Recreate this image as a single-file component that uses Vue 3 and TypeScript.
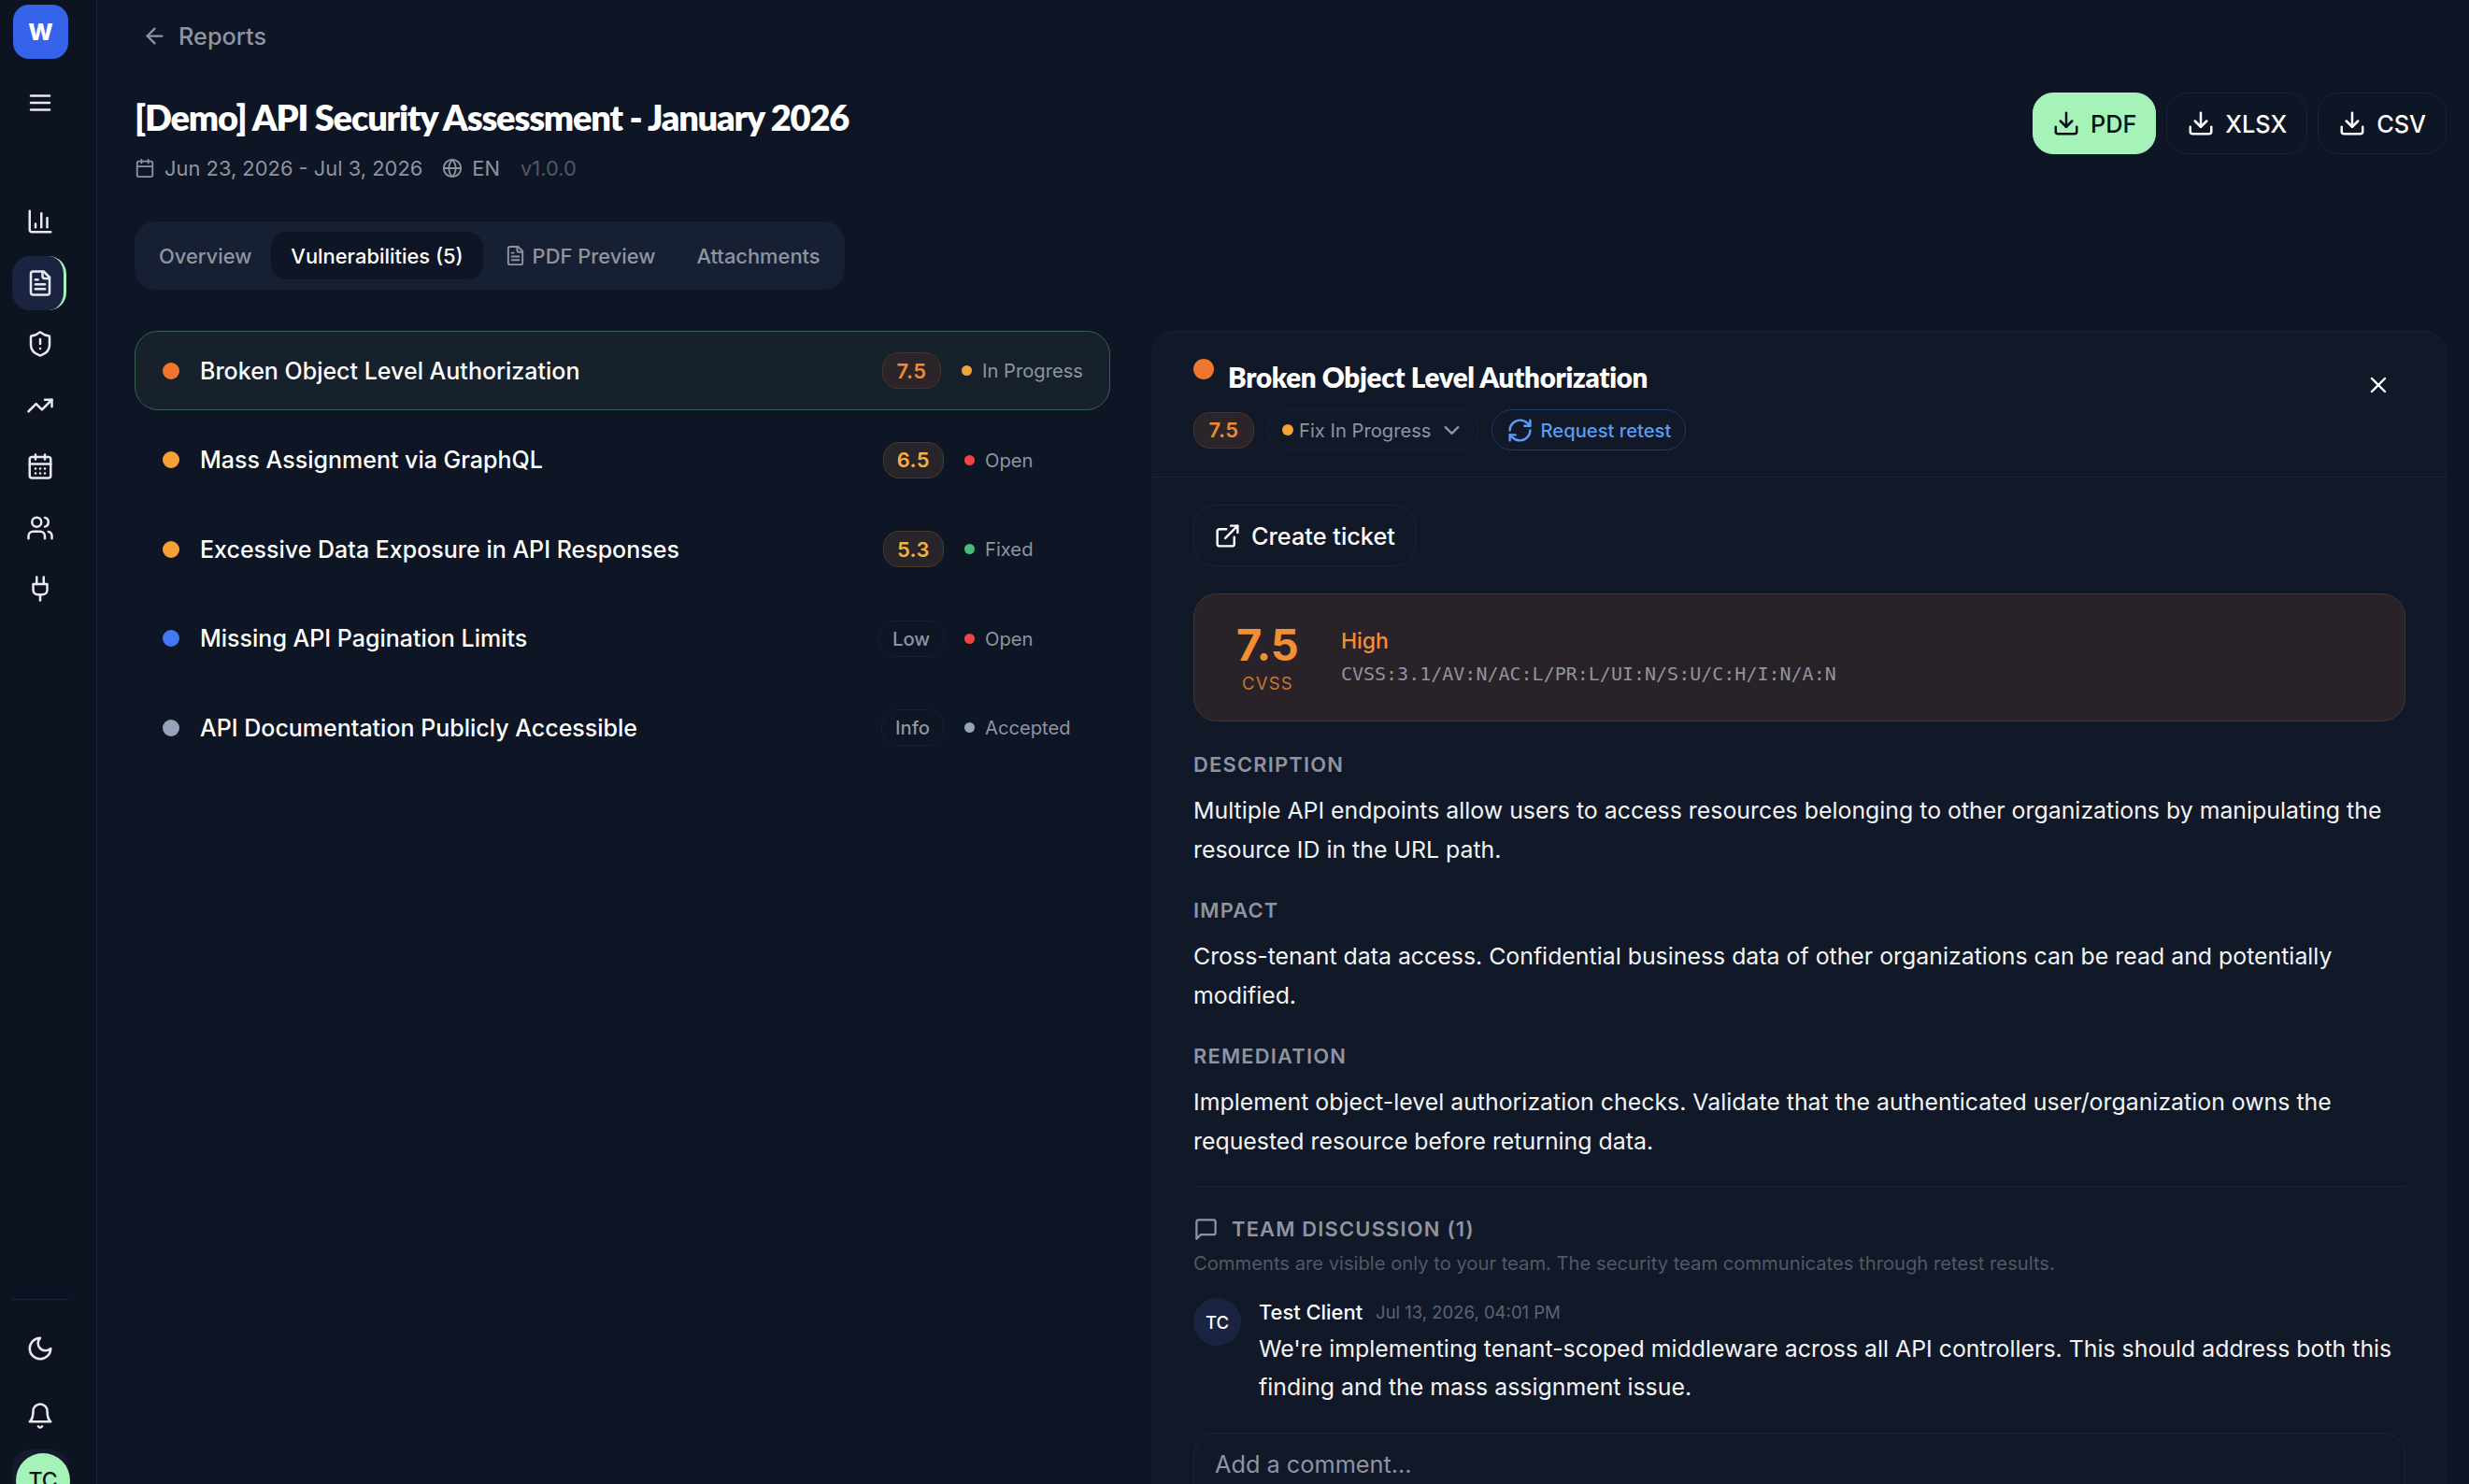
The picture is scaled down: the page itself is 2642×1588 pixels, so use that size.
<script setup lang="ts">
import { h } from "vue";
import type { FunctionalComponent } from "vue";

const icons: Record<string, string[]> = {
  menu: ["M4 6h16", "M4 12h16", "M4 18h16"],
  chart: ["M3 3v16a2 2 0 0 0 2 2h16", "M18 17V9", "M13 17V5", "M8 17v-3"],
  file: [
    "M15 2H6a2 2 0 0 0-2 2v16a2 2 0 0 0 2 2h12a2 2 0 0 0 2-2V7Z",
    "M14 2v4a2 2 0 0 0 2 2h4",
    "M10 9H8",
    "M16 13H8",
    "M16 17H8",
  ],
  shield: [
    "M20 13c0 5-3.5 7.5-7.66 8.95a1 1 0 0 1-.67-.01C7.5 20.5 4 18 4 13V6a1 1 0 0 1 1-1c2 0 4.5-1.2 6.24-2.72a1.17 1.17 0 0 1 1.52 0C14.51 3.81 17 5 19 5a1 1 0 0 1 1 1z",
    "M12 8v4",
    "M12 16h.01",
  ],
  trend: ["M22 7l-8.5 8.5-5-5L2 17", "M16 7h6v6"],
  calendarDays: [
    "M8 2v4",
    "M16 2v4",
    "M5 4h14a2 2 0 0 1 2 2v14a2 2 0 0 1-2 2H5a2 2 0 0 1-2-2V6a2 2 0 0 1 2-2z",
    "M3 10h18",
    "M8 14h.01",
    "M12 14h.01",
    "M16 14h.01",
    "M8 18h.01",
    "M12 18h.01",
    "M16 18h.01",
  ],
  users: [
    "M16 21v-2a4 4 0 0 0-4-4H6a4 4 0 0 0-4 4v2",
    "M9 3a4 4 0 1 0 0 8 4 4 0 1 0 0-8",
    "M22 21v-2a4 4 0 0 0-3-3.87",
    "M16 3.13a4 4 0 0 1 0 7.75",
  ],
  plug: ["M12 22v-5", "M9 8V2", "M15 8V2", "M18 8v5a4 4 0 0 1-4 4h-4a4 4 0 0 1-4-4V8Z"],
  moon: ["M12 3a6 6 0 0 0 9 9 9 9 0 1 1-9-9Z"],
  bell: ["M6 8a6 6 0 0 1 12 0c0 7 3 9 3 9H3s3-2 3-9", "M10.3 21a1.94 1.94 0 0 0 3.4 0"],
  download: ["M21 15v4a2 2 0 0 1-2 2H5a2 2 0 0 1-2-2v-4", "M7 10l5 5 5-5", "M12 15V3"],
  arrowLeft: ["m12 19-7-7 7-7", "M19 12H5"],
  calendar: [
    "M8 2v4",
    "M16 2v4",
    "M5 4h14a2 2 0 0 1 2 2v14a2 2 0 0 1-2 2H5a2 2 0 0 1-2-2V6a2 2 0 0 1 2-2z",
    "M3 10h18",
  ],
  globe: [
    "M12 2a10 10 0 1 0 0 20 10 10 0 1 0 0-20",
    "M12 2a14.5 14.5 0 0 0 0 20 14.5 14.5 0 0 0 0-20",
    "M2 12h20",
  ],
  close: ["M18 6 6 18", "m6 6 12 12"],
  chevron: ["m6 9 6 6 6-6"],
  refresh: [
    "M3 12a9 9 0 0 1 9-9 9.75 9.75 0 0 1 6.74 2.74L21 8",
    "M21 3v5h-5",
    "M21 12a9 9 0 0 1-9 9 9.75 9.75 0 0 1-6.74-2.74L3 16",
    "M8 16H3v5",
  ],
  external: [
    "M15 3h6v6",
    "M10 14 21 3",
    "M18 13v6a2 2 0 0 1-2 2H5a2 2 0 0 1-2-2V8a2 2 0 0 1 2-2h6",
  ],
  message: ["M21 15a2 2 0 0 1-2 2H7l-4 4V5a2 2 0 0 1 2-2h14a2 2 0 0 1 2 2z"],
};

const Icon: FunctionalComponent<{ name: string }> = (props) =>
  h(
    "svg",
    {
      viewBox: "0 0 24 24",
      fill: "none",
      stroke: "currentColor",
      "stroke-width": 2,
      "stroke-linecap": "round",
      "stroke-linejoin": "round",
    },
    icons[props.name].map((d) => h("path", { d }))
  );

const navItems = ["chart", "file", "shield", "trend", "calendarDays", "users", "plug"];

const findings = [
  { title: "Broken Object Level Authorization", dot: "orange", score: "7.5", tone: "high", status: "In Progress", statusDot: "amber", active: true },
  { title: "Mass Assignment via GraphQL", dot: "amber", score: "6.5", tone: "medium", status: "Open", statusDot: "red", active: false },
  { title: "Excessive Data Exposure in API Responses", dot: "amber", score: "5.3", tone: "medium", status: "Fixed", statusDot: "green", active: false },
  { title: "Missing API Pagination Limits", dot: "blue", score: "Low", tone: "plain", status: "Open", statusDot: "red", active: false },
  { title: "API Documentation Publicly Accessible", dot: "slate", score: "Info", tone: "plain", status: "Accepted", statusDot: "slate", active: false },
];

const sections = [
  {
    label: "Description",
    text: "Multiple API endpoints allow users to access resources belonging to other organizations by manipulating the resource ID in the URL path.",
  },
  {
    label: "Impact",
    text: "Cross-tenant data access. Confidential business data of other organizations can be read and potentially modified.",
  },
  {
    label: "Remediation",
    text: "Implement object-level authorization checks. Validate that the authenticated user/organization owns the requested resource before returning data.",
  },
];
</script>

<template>
  <div class="app">
    <aside class="sidebar">
      <div class="logo">W</div>
      <button class="menu-btn"><Icon name="menu" class="nav-icon" /></button>
      <nav class="nav">
        <a v-for="item in navItems" :key="item" class="nav-item" :class="{ active: item === 'file' }">
          <Icon :name="item" class="nav-icon" />
        </a>
      </nav>
      <div class="side-footer">
        <div class="side-divider"></div>
        <button class="foot-btn"><Icon name="moon" class="nav-icon" /></button>
        <button class="foot-btn"><Icon name="bell" class="nav-icon" /></button>
        <div class="user-wrap"><div class="user-avatar">TC</div></div>
      </div>
    </aside>

    <main class="main">
      <a class="back"><Icon name="arrowLeft" class="back-icon" />Reports</a>

      <header class="header">
        <div>
          <h1 class="page-title">[Demo] API Security Assessment - January 2026</h1>
          <div class="meta">
            <Icon name="calendar" class="meta-icon" />
            <span class="meta-date">Jun 23, 2026 - Jul 3, 2026</span>
            <Icon name="globe" class="meta-icon" />
            <span class="meta-lang">EN</span>
            <span class="meta-version">v1.0.0</span>
          </div>
        </div>
        <div class="exports">
          <button class="export primary"><Icon name="download" class="btn-icon" />PDF</button>
          <button class="export"><Icon name="download" class="btn-icon" />XLSX</button>
          <button class="export"><Icon name="download" class="btn-icon" />CSV</button>
        </div>
      </header>

      <div class="tabs">
        <span class="tab">Overview</span>
        <span class="tab selected">Vulnerabilities (5)</span>
        <span class="tab"><Icon name="file" class="tab-icon" />PDF Preview</span>
        <span class="tab">Attachments</span>
      </div>

      <div class="columns">
        <ul class="list">
          <li v-for="f in findings" :key="f.title" class="row" :class="{ active: f.active }">
            <span class="dot" :class="f.dot"></span>
            <span class="row-title">{{ f.title }}</span>
            <span class="chip" :class="f.tone">{{ f.score }}</span>
            <span class="status">
              <span class="status-dot" :class="f.statusDot"></span>{{ f.status }}
            </span>
          </li>
        </ul>

        <section class="panel">
          <div class="panel-head">
            <div>
              <div class="panel-title-row">
                <span class="panel-dot"></span>
                <h2 class="panel-title">Broken Object Level Authorization</h2>
              </div>
              <div class="panel-chips">
                <span class="chip high panel-score">7.5</span>
                <button class="status-select">
                  <span class="status-dot amber"></span>Fix In Progress
                  <Icon name="chevron" class="chevron" />
                </button>
                <button class="retest"><Icon name="refresh" class="retest-icon" />Request retest</button>
              </div>
            </div>
            <button class="close"><Icon name="close" class="close-icon" /></button>
          </div>

          <div class="panel-body">
            <button class="ticket"><Icon name="external" class="ticket-icon" />Create ticket</button>

            <div class="cvss">
              <div class="cvss-score">
                <div class="cvss-value">7.5</div>
                <div class="cvss-label">CVSS</div>
              </div>
              <div>
                <div class="cvss-level">High</div>
                <code class="cvss-vector">CVSS:3.1/AV:N/AC:L/PR:L/UI:N/S:U/C:H/I:N/A:N</code>
              </div>
            </div>

            <div v-for="s in sections" :key="s.label" class="section">
              <h3 class="section-label">{{ s.label }}</h3>
              <p class="section-text">{{ s.text }}</p>
            </div>

            <div class="discussion">
              <h3 class="discussion-title"><Icon name="message" class="discussion-icon" />Team Discussion (1)</h3>
              <p class="discussion-note">Comments are visible only to your team. The security team communicates through retest results.</p>
              <div class="comment">
                <div class="comment-avatar">TC</div>
                <div>
                  <div class="comment-meta">
                    <span class="comment-author">Test Client</span>
                    <span class="comment-time">Jul 13, 2026, 04:01 PM</span>
                  </div>
                  <p class="comment-text">We're implementing tenant-scoped middleware across all API controllers. This should address both this finding and the mass assignment issue.</p>
                </div>
              </div>
              <textarea class="comment-input" placeholder="Add a comment..."></textarea>
            </div>
          </div>
        </section>
      </div>
    </main>
  </div>
</template>

<style>
html,
body {
  margin: 0;
  background: #0e1524;
}
</style>

<style scoped>
* {
  box-sizing: border-box;
}

button {
  font-family: inherit;
  background: none;
  border: none;
  color: inherit;
  padding: 0;
}

h1,
h2,
h3,
p,
ul {
  margin: 0;
  padding: 0;
}

svg {
  display: block;
  flex-shrink: 0;
}

.app {
  display: flex;
  width: 2642px;
  height: 1588px;
  overflow: hidden;
  background: #0e1524;
  color: #fff;
  font-family: Inter, "Liberation Sans", sans-serif;
}

.sidebar {
  width: 104px;
  flex-shrink: 0;
  display: flex;
  flex-direction: column;
  padding: 5px 0 0 13px;
  background: #0d1321;
  border-right: 1px solid #1a2235;
  color: #e8eaee;
}

.logo {
  width: 59px;
  height: 58px;
  margin-left: 1px;
  display: flex;
  align-items: center;
  justify-content: center;
  border-radius: 17px;
  background: #3563e9;
  color: #fff;
  font-size: 25px;
  font-weight: 800;
}

.menu-btn {
  width: 60px;
  height: 44px;
  margin-top: 25px;
  display: flex;
  align-items: center;
  justify-content: center;
}

.nav-icon {
  width: 30px;
  height: 30px;
}

.nav {
  display: flex;
  flex-direction: column;
  gap: 7.5px;
  margin-top: 76px;
}

.nav-item {
  width: 58px;
  height: 58px;
  display: flex;
  align-items: center;
  justify-content: center;
  padding-left: 1px;
  border-radius: 19px;
}

.nav-item.active {
  background: #1a2440;
  border-right: 3px solid #a5f3b8;
  padding-left: 4px;
}

.side-footer {
  margin-top: auto;
  margin-bottom: -29px;
  display: flex;
  flex-direction: column;
}

.side-divider {
  width: 61px;
  height: 1px;
  margin-bottom: 28px;
  background: #1c2540;
}

.foot-btn {
  width: 60px;
  height: 48px;
  margin-bottom: 24px;
  display: flex;
  align-items: center;
  justify-content: center;
}

.foot-btn:last-of-type {
  margin-bottom: 12px;
}

.user-wrap {
  width: 60px;
  height: 66px;
  padding-top: 4px;
  border-radius: 19px;
  background: #141b2d;
}

.user-avatar {
  width: 58px;
  height: 58px;
  margin-left: 4px;
  display: flex;
  align-items: center;
  justify-content: center;
  border-radius: 50%;
  background: #a5f3b8;
  color: #0d1321;
  font-size: 23px;
  font-weight: 500;
}

.main {
  flex: 1;
  min-width: 0;
  padding: 0 24px 0 40px;
}

.back {
  height: 76px;
  margin-bottom: 24px;
  padding-left: 8px;
  display: flex;
  align-items: center;
  gap: 12px;
  color: #8f94a0;
  font-size: 25.3px;
  font-weight: 500;
}

.back-icon {
  width: 27px;
  height: 27px;
}

.header {
  display: flex;
  justify-content: space-between;
  align-items: flex-start;
  margin-bottom: 42px;
}

.page-title {
  font-family: Lato, "Liberation Sans", sans-serif;
  font-size: 38px;
  line-height: 50px;
  font-weight: 800;
  letter-spacing: -1.2px;
}

.meta {
  display: flex;
  align-items: center;
  height: 30px;
  margin-top: 15px;
  color: #8f94a0;
  font-size: 21.9px;
}

.meta-icon {
  width: 22px;
  height: 22px;
}

.meta-date {
  margin: 0 21px 0 10px;
}

.meta-lang {
  margin: 0 22px 0 10px;
}

.meta-version {
  color: #525865;
}

.exports {
  display: flex;
  gap: 11px;
  margin-top: -1px;
}

.export {
  height: 66px;
  padding: 0 21px;
  display: flex;
  align-items: center;
  gap: 11px;
  border: 1px solid #1b2338;
  border-radius: 22px;
  color: #fff;
  font-size: 25.3px;
  font-weight: 500;
}

.export.primary {
  padding: 0 20px;
  background: #a5f3b8;
  border-color: #a5f3b8;
  color: #0a0f1a;
}

.btn-icon {
  width: 30px;
  height: 30px;
}

.tabs {
  display: inline-flex;
  gap: 2px;
  padding: 11px 5px;
  background: #172033;
  border-radius: 22px;
  vertical-align: top;
}

.tab {
  height: 51px;
  padding: 0 21px;
  display: flex;
  align-items: center;
  gap: 7px;
  border-radius: 17px;
  color: #8f94a0;
  font-size: 21.9px;
  font-weight: 500;
}

.tab:first-child {
  padding-right: 19px;
}

.tab.selected {
  background: #0e1524;
  color: #fff;
}

.tab-icon {
  width: 23px;
  height: 23px;
}

.columns {
  display: grid;
  grid-template-columns: 1044px 1fr;
  gap: 45px;
  margin-top: 44px;
}

.list {
  display: flex;
  flex-direction: column;
  gap: 10.5px;
  list-style: none;
}

.row {
  height: 85px;
  padding: 0 28px 0 29px;
  display: flex;
  align-items: center;
  border: 1px solid transparent;
  border-radius: 25px;
}

.row.active {
  background: #17212b;
  border-color: #37614f;
}

.dot {
  width: 18px;
  height: 18px;
  margin-right: 22px;
  border-radius: 50%;
}

.dot.orange,
.panel-dot {
  background: #f0752d;
}

.dot.amber {
  background: #f5a13a;
}

.dot.blue {
  background: #4478f5;
}

.dot.slate {
  background: #94a3b8;
}

.row-title {
  flex: 1;
  font-size: 25px;
  font-weight: 500;
}

.chip {
  height: 39px;
  min-width: 63px;
  padding: 0 14px;
  display: inline-flex;
  align-items: center;
  justify-content: center;
  border: 1px solid transparent;
  border-radius: 17px;
  font-size: 21.9px;
  font-weight: 600;
  letter-spacing: 0.5px;
}

.chip.high {
  background: #2b2429;
  border-color: #4a3427;
  color: #f08a33;
}

.chip.medium {
  background: #27242a;
  border-color: #4a3c27;
  color: #f5b13d;
}

.chip.plain {
  border-color: #171f30;
  color: #8f94a0;
  font-size: 20.2px;
  font-weight: 500;
  letter-spacing: 0;
}

.status {
  min-width: 127px;
  margin-left: 22px;
  display: flex;
  align-items: center;
  color: #8f94a0;
  font-size: 20.2px;
}

.status-dot {
  width: 11px;
  height: 11px;
  margin-right: 11px;
  border-radius: 50%;
  flex-shrink: 0;
}

.status-dot.amber {
  background: #f5a13a;
}

.status-dot.red {
  background: #ef4444;
}

.status-dot.green {
  background: #48bb78;
}

.status-dot.slate {
  background: #94a3b8;
}

.panel {
  background: #111827;
  border: 1px solid #182134;
  border-radius: 25px;
  height: 1400px;
}

.panel-head {
  display: flex;
  justify-content: space-between;
  align-items: flex-start;
  padding: 28px 50px 28px 43px;
  border-bottom: 1px solid #1c2540;
}

.panel-title-row {
  display: flex;
  align-items: flex-start;
}

.panel-dot {
  width: 22px;
  height: 22px;
  margin: 1px 15px 0 0;
  border-radius: 50%;
}

.panel-title {
  font-family: Lato, "Liberation Sans", sans-serif;
  font-size: 29.5px;
  line-height: 42px;
  font-weight: 800;
  letter-spacing: -0.3px;
}

.panel-chips {
  display: flex;
  align-items: center;
  gap: 14px;
  margin-top: 13px;
}

.panel-score {
  min-width: 65px;
}

.status-select {
  height: 44px;
  padding: 0 14px 0 15px;
  display: flex;
  align-items: center;
  border: 1px solid #182134;
  border-radius: 22px;
  color: #8f94a0;
  font-size: 20.2px;
}

.status-select .status-dot {
  width: 12px;
  height: 12px;
  margin-right: 6px;
}

.chevron {
  width: 27px;
  height: 27px;
  margin-left: 8px;
}

.retest {
  height: 44px;
  padding: 0 15px;
  display: flex;
  align-items: center;
  gap: 8px;
  border: 1px solid #1e3a6e;
  border-radius: 22px;
  color: #5b9cf5;
  font-size: 20.2px;
  font-weight: 500;
}

.retest-icon {
  width: 29px;
  height: 29px;
}

.close {
  width: 44px;
  height: 44px;
  margin-top: 7px;
  display: flex;
  align-items: center;
  justify-content: center;
}

.close-icon {
  width: 28px;
  height: 28px;
}

.panel-body {
  padding: 29px 43px 0 43px;
}

.ticket {
  height: 66px;
  padding: 0 21px;
  display: flex;
  align-items: center;
  gap: 11px;
  border: 1px solid #1b2338;
  border-radius: 22px;
  color: #fff;
  font-size: 25.3px;
  font-weight: 500;
}

.ticket-icon {
  width: 29px;
  height: 29px;
}

.cvss {
  height: 137px;
  margin-top: 29px;
  padding: 0 45px;
  display: flex;
  align-items: center;
  gap: 45px;
  background: #2a2229;
  border: 1px solid #4a3226;
  border-radius: 25px;
}

.cvss-score {
  text-align: center;
}

.cvss-value {
  font-size: 47px;
  line-height: 50px;
  font-weight: 700;
  color: #f08f33;
}

.cvss-label {
  margin-top: 5px;
  font-size: 18.5px;
  line-height: 22px;
  letter-spacing: 1.2px;
  color: #c8782c;
}

.cvss-level {
  font-size: 23px;
  line-height: 30px;
  font-weight: 500;
  color: #f08f33;
}

.cvss-vector {
  display: block;
  margin-top: 5px;
  font-family: "DejaVu Sans Mono", monospace;
  font-size: 20px;
  line-height: 30px;
  color: #8f94a0;
}

.section {
  margin-top: 29px;
}

.cvss + .section {
  margin-top: 31px;
}

.section-label {
  font-size: 21.9px;
  line-height: 30px;
  font-weight: 600;
  letter-spacing: 1.2px;
  text-transform: uppercase;
  color: #8f94a0;
}

.section-text {
  margin-top: 14px;
  font-size: 24.87px;
  line-height: 41.5px;
  color: #f3f4f6;
}

.discussion {
  margin-top: 27px;
  padding-top: 30px;
  border-top: 1px solid #1c2540;
}

.discussion-title {
  display: flex;
  align-items: center;
  gap: 14px;
  font-size: 21.9px;
  line-height: 30px;
  font-weight: 600;
  letter-spacing: 1.2px;
  text-transform: uppercase;
  color: #8f94a0;
}

.discussion-icon {
  width: 27px;
  height: 27px;
}

.discussion-note {
  margin-top: 7px;
  font-size: 20.2px;
  line-height: 30px;
  color: #525865;
}

.comment {
  display: flex;
  gap: 19px;
  margin-top: 22px;
}

.comment-avatar {
  width: 51px;
  height: 51px;
  flex-shrink: 0;
  display: flex;
  align-items: center;
  justify-content: center;
  border-radius: 50%;
  background: #1a2440;
  font-size: 18.5px;
  font-weight: 500;
}

.comment-meta {
  display: flex;
  align-items: center;
  gap: 14px;
  height: 30px;
}

.comment-author {
  font-size: 21.9px;
  font-weight: 500;
}

.comment-time {
  font-size: 18.5px;
  color: #5f6470;
}

.comment-text {
  margin-top: 4px;
  font-size: 24.87px;
  line-height: 41px;
  color: #f3f4f6;
}

.comment-input {
  display: block;
  width: 100%;
  height: 120px;
  margin-top: 28px;
  padding: 17px 22px;
  resize: none;
  outline: none;
  background: #111827;
  border: 1px solid #1c2540;
  border-radius: 25px;
  color: #fff;
  font-family: inherit;
  font-size: 25.3px;
  line-height: 32px;
}

.comment-input::placeholder {
  color: #8f94a0;
}
</style>
